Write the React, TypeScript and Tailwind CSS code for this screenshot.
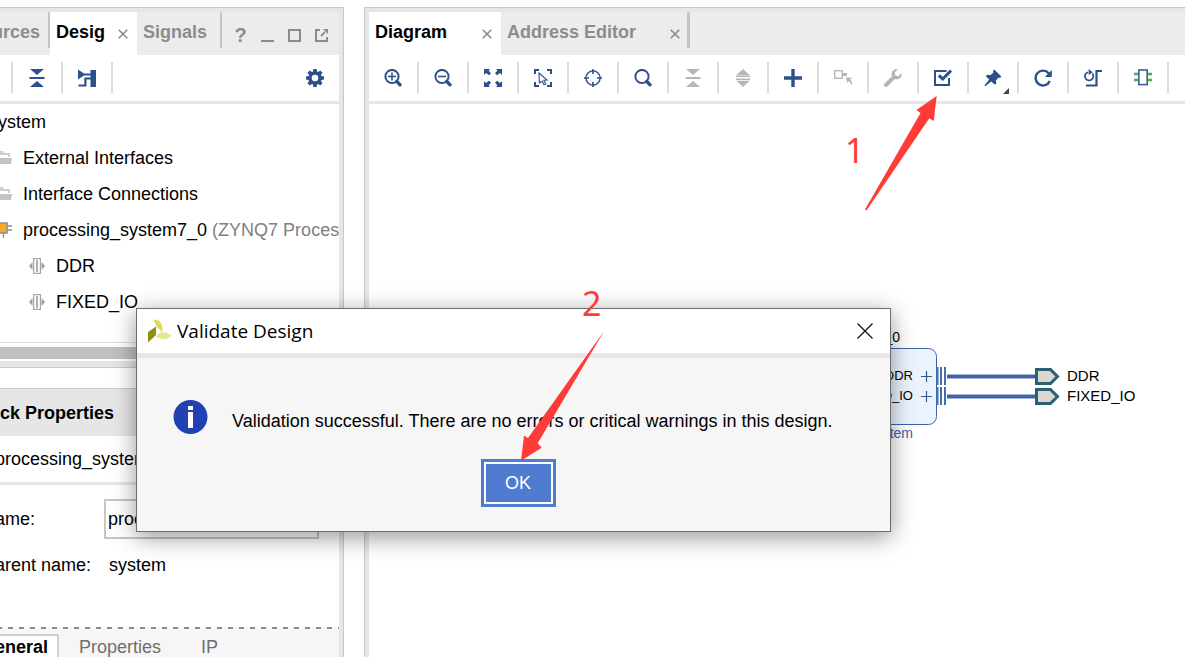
import type { ReactNode } from "react";

const NAVY = "#2d4f8b";
const MUTED = "#b6b6b6";

function Icon({ children, size = 18 }: { children: ReactNode; size?: number }) {
  return (
    <svg width={size} height={size} viewBox={`0 0 ${size} ${size}`} fill="none" aria-hidden="true" className="shrink-0">
      {children}
    </svg>
  );
}

function CloseGlyph() {
  return (
    <svg width="10" height="10" viewBox="0 0 10 10" aria-hidden="true">
      <path d="M0.7 0.7L9.3 9.3M9.3 0.7L0.7 9.3" stroke="#8c8c8c" strokeWidth="1.6" />
    </svg>
  );
}

function Collapse({ color }: { color: string }) {
  return (
    <Icon>
      <path d="M2 0H16L9 6ZM2 18H16L9 12Z" fill={color} />
      <path d="M1.5 9H16.5" stroke={color} strokeWidth="2" />
    </Icon>
  );
}

function Gear() {
  const teeth = [0, 45, 90, 135, 180, 225, 270, 315];
  return (
    <Icon>
      <circle cx="9" cy="9" r="5" stroke={NAVY} strokeWidth="3.4" />
      {teeth.map((a) => (
        <path key={a} d="M7.4 0H10.6L11.2 3.4H6.8Z" fill={NAVY} transform={`rotate(${a} 9 9)`} />
      ))}
    </Icon>
  );
}

const magnifier = (
  <>
    <circle cx="8" cy="7.5" r="6.6" stroke={NAVY} strokeWidth="2" />
    <path d="M12.8 12.4L16 15.8" stroke={NAVY} strokeWidth="3.4" strokeLinecap="round" />
  </>
);

const tools: { name: string; icon: ReactNode; disabled?: boolean }[] = [
  {
    name: "Zoom in",
    icon: (
      <Icon>
        {magnifier}
        <path d="M4 7.5H12M8 3.5V11.5" stroke={NAVY} strokeWidth="1.5" />
      </Icon>
    ),
  },
  {
    name: "Zoom out",
    icon: (
      <Icon>
        {magnifier}
        <path d="M4 7.5H12" stroke={NAVY} strokeWidth="1.6" />
      </Icon>
    ),
  },
  {
    name: "Zoom fit",
    icon: (
      <Icon>
        <path d="M0 0H6L4.6 1.6L7 4.2L5 6.2L2 3.9L0 6ZM18 0V6L16 3.9L13 6.2L11 4.2L13.4 1.6L12 0ZM0 18V12L2 14.1L5 11.8L7 13.8L4.6 16.4L6 18ZM18 18H12L13.4 16.4L11 13.8L13 11.8L16 14.1L18 12Z" fill={NAVY} />
      </Icon>
    ),
  },
  {
    name: "Select area",
    icon: (
      <Icon>
        <path d="M1 5V1H5M13 1H17V5M17 13V17H13M5 17H1V13" stroke={NAVY} strokeWidth="2" />
        <path d="M5 4L13 11L9.8 11.2L11.8 15L10 15.8L8.2 12.2L5.4 14Z" stroke={NAVY} strokeWidth="1.1" />
      </Icon>
    ),
  },
  {
    name: "Center selection",
    icon: (
      <Icon>
        <circle cx="9" cy="9" r="7.1" stroke={NAVY} strokeWidth="1.4" />
        <path d="M9 0V5M9 13V18M0 9H5M13 9H18" stroke={NAVY} strokeWidth="1.6" />
      </Icon>
    ),
  },
  { name: "Search", icon: <Icon>{magnifier}</Icon> },
  { name: "Collapse all", icon: <Collapse color={MUTED} />, disabled: true },
  {
    name: "Expand all",
    icon: (
      <Icon>
        <path d="M2.5 6L9 0L15.5 6ZM2.5 12H15.5L9 18Z" fill={MUTED} />
        <path d="M2 7.2H16M2 10.4H16" stroke={MUTED} strokeWidth="1.6" />
      </Icon>
    ),
    disabled: true,
  },
  {
    name: "Add IP",
    icon: (
      <Icon>
        <path d="M9 0V18M0 9H18" stroke={NAVY} strokeWidth="3.4" />
      </Icon>
    ),
  },
  {
    name: "Make external",
    icon: (
      <Icon>
        <rect x="0.7" y="1.7" width="7.6" height="7.6" stroke={MUTED} strokeWidth="1.4" />
        <path d="M9 4H13V7H9ZM12 8.5H18L16.2 10.4L18 13V16L14.8 12L13 14Z" fill={MUTED} />
      </Icon>
    ),
    disabled: true,
  },
  {
    name: "Customize block",
    icon: (
      <Icon>
        <path d="M17.6 4.2L14.4 7.2L11.4 6.6L10.8 3.8L13.8 0.6C11 -0.4 7.6 1.6 7.6 5.2C7.6 6 7.7 6.6 8 7.2L0.8 14.2C-0.4 15.4 -0.2 16.6 0.6 17.4C1.4 18.2 2.8 18.2 3.8 17.2L10.8 10C14.8 11.4 18.8 8 17.6 4.2Z" fill={MUTED} />
      </Icon>
    ),
    disabled: true,
  },
  {
    name: "Validate design",
    icon: (
      <Icon>
        <path d="M12.5 2H1V16H15V9" stroke={NAVY} strokeWidth="2" />
        <path d="M4.8 6.5L8.8 10L17 1.6" stroke={NAVY} strokeWidth="3" />
      </Icon>
    ),
  },
  {
    name: "Pin",
    icon: (
      <Icon>
        <path d="M10.2 0.6L17.4 7.6L16 9L14.6 8.6L12 11.4L12.2 15L10.6 15.6L7.2 12.6L1.2 17.2L0.4 16.6L5.2 10.6L2 7.4L3 5.8L6.6 6L9.4 3.4L9 2Z" fill={NAVY} />
      </Icon>
    ),
  },
  {
    name: "Regenerate layout",
    icon: (
      <Icon>
        <path d="M14.8 4.4A7.4 7.4 0 1 0 15.8 12" stroke={NAVY} strokeWidth="2.4" />
        <path d="M17.8 1V8H10.8Z" fill={NAVY} />
      </Icon>
    ),
  },
  {
    name: "Optimize routing",
    icon: (
      <Icon>
        <path d="M4 3.2A4.2 4.2 0 1 0 8.4 4.6" stroke={NAVY} strokeWidth="1.7" />
        <path d="M4.6 0L8.8 3.2L4.6 6Z" fill={NAVY} />
        <path d="M2 16.5H12.5V2H18" stroke={NAVY} strokeWidth="2.2" />
      </Icon>
    ),
  },
  {
    name: "Interface view",
    icon: (
      <Icon>
        <path d="M0 5H5M0 11H5M13 5H18M13 11H18" stroke="#42b549" strokeWidth="2.4" />
        <rect x="4.8" y="1" width="8.4" height="14.6" stroke="#3f5f95" strokeWidth="1.6" fill="#fff" />
      </Icon>
    ),
  },
];

function FolderIcon() {
  return (
    <svg width="12" height="14" viewBox="0 0 12 14" aria-hidden="true" className="shrink-0">
      <path d="M0 0H3L4 2H10V6H8V4H0Z" fill="#cfcfcf" />
      <path d="M0 7H12L11 13H0Z" fill="#c4c4c4" />
    </svg>
  );
}

function IpIcon() {
  return (
    <svg width="12" height="18" viewBox="0 0 12 18" aria-hidden="true" className="shrink-0">
      <path d="M7 5H12M7 9H12M3.5 11V17" stroke="#8f8f8f" strokeWidth="1.4" />
      <path d="M-2 2H7V12H-2Z" fill="#f8aa26" stroke="#8f8f8f" strokeWidth="1.6" />
    </svg>
  );
}

function BusIcon() {
  return (
    <svg width="16" height="16" viewBox="0 0 16 16" aria-hidden="true" className="shrink-0">
      <path d="M3.5 4V12L0 8ZM12.5 4V12L16 8Z" fill="#a0a0a0" />
      <rect x="4.6" y="0.6" width="6.8" height="14.8" fill="#fff" stroke="#a6a6a6" strokeWidth="1.2" />
      <path d="M8 2V14" stroke="#a6a6a6" strokeWidth="1.8" />
    </svg>
  );
}

function LeftTabs() {
  return (
    <div className="flex h-[43px] bg-[#ececec]">
      <div className="flex h-9 w-[50px] shrink-0 justify-end overflow-hidden border-r-2 border-[#c4c4c4]">
        <button className="mr-2 mt-[10px] h-5 font-bold leading-5 text-[#8c8c8c]">urces</button>
      </div>
      <div className="flex w-[87px] shrink-0 items-start bg-white pl-[6px] pt-[10px]">
        <button className="font-bold leading-5">Desig</button>
        <button aria-label="Close Design" className="ml-[13px] mt-[7px]">
          <CloseGlyph />
        </button>
      </div>
      <div className="h-9 w-[85px] shrink-0 border-r-2 border-[#c4c4c4] pl-[6px] pt-[10px]">
        <button className="block font-bold leading-5 text-[#8c8c8c]">Signals</button>
      </div>
      <div className="flex flex-1 items-end justify-end gap-[14px] pb-[13px] pr-[11px]">
        <button aria-label="Help" className="h-[15px] w-[13px] text-xl font-bold leading-4 text-[#8c8c8c]">?</button>
        <button aria-label="Minimize">
          <Icon size={13}><path d="M0 12H13" stroke="#8c8c8c" strokeWidth="2" /></Icon>
        </button>
        <button aria-label="Maximize">
          <Icon size={13}><rect x="1" y="1" width="11" height="11" stroke="#8c8c8c" strokeWidth="2" /></Icon>
        </button>
        <button aria-label="Float">
          <Icon size={13}>
            <path d="M5 1H1V12H12V8" stroke="#8c8c8c" strokeWidth="2" />
            <path d="M6 7L10 3" stroke="#8c8c8c" strokeWidth="1.8" />
            <path d="M8 0H13V5Z" fill="#8c8c8c" />
          </Icon>
        </button>
      </div>
    </div>
  );
}

function LeftToolbar() {
  return (
    <div className="flex h-[49px] items-start border-b-3 border-[#e6e6e6] pt-[7px]">
      <div className="h-[31px] w-[13px] shrink-0 border-r-2 border-[#dcdcdc]" />
      <button aria-label="Collapse all" className="flex h-[31px] w-[50px] items-center justify-center border-r-2 border-[#dcdcdc]">
        <Collapse color={NAVY} />
      </button>
      <button aria-label="Hierarchy" className="flex h-[31px] w-[50px] items-center justify-center border-r-2 border-[#dcdcdc]">
        <Icon>
          <path d="M0 0.5L6 4.4H12.5V1H18V18H12.5V10.5H8.5V17.6H0.5V15.6H6.3V8.5H12.5V6.6H6L0 10.5Z" fill={NAVY} />
        </Icon>
      </button>
      <button aria-label="Settings" className="ml-auto mr-[15px] flex h-[31px] items-center">
        <Gear />
      </button>
    </div>
  );
}

function DesignTree() {
  return (
    <ul className="h-[238px] whitespace-nowrap">
      <li className="-ml-[2px] flex h-9 items-center">ystem</li>
      <li className="flex h-9 items-center gap-[11px]"><FolderIcon />External Interfaces</li>
      <li className="flex h-9 items-center gap-[11px]"><FolderIcon />Interface Connections</li>
      <li className="flex h-9 items-center gap-[11px]">
        <IpIcon />
        <span>processing_system7_0 <span className="text-[#808080]">(ZYNQ7 Proces</span></span>
      </li>
      <li className="flex h-9 items-center gap-[11px] pl-[29px]"><BusIcon />DDR</li>
      <li className="flex h-9 items-center gap-[11px] pl-[29px]"><BusIcon />FIXED_IO</li>
    </ul>
  );
}

function BlockProperties() {
  return (
    <section className="mt-5 flex min-h-0 flex-1 flex-col border-r border-t border-[#c8c8c8]">
      <div className="flex min-h-0 flex-1 flex-col overflow-hidden border-r-4 border-[#e6e6e6]">
        <h2 className="flex h-[47px] shrink-0 items-center bg-[#e6e6e6] font-bold">ck Properties</h2>
        <div className="flex h-[49px] shrink-0 items-center border-b-3 border-[#e6e6e6]">
          <span className="-ml-[5px]">processing_system7_0</span>
        </div>
        <div className="-ml-[5px] flex h-[68px] shrink-0 items-center">
          <label htmlFor="block-name" className="w-[109px]">ame:</label>
          <input
            id="block-name"
            defaultValue="processing_system7_0"
            className="h-10 w-[215px] border-2 border-[#c6c6c6] bg-white px-[2px] outline-none"
          />
        </div>
        <div className="-ml-[5px] flex h-6 shrink-0 items-center whitespace-nowrap">
          <span className="w-[114px]">arent name:</span>
          <span>system</span>
        </div>
        <div className="mt-[50px] flex-1 bg-[#f6f6f6]">
          <svg width="100%" height="2" aria-hidden="true" className="block">
            <path d="M-3 1H2000" stroke="#8c8c8c" strokeWidth="2" strokeDasharray="5 6" />
          </svg>
          <div className="-ml-[5px] flex pt-[5px]">
            <button className="h-[23px] w-16 border-r-2 border-t-2 border-[#cfcfcf] bg-white text-left font-bold leading-5">eneral</button>
            <button className="ml-5 h-[23px] pt-[2px] leading-5 text-[#6e6e6e]">Properties</button>
            <button className="ml-10 h-[23px] pt-[2px] leading-5 text-[#6e6e6e]">IP</button>
          </div>
        </div>
      </div>
    </section>
  );
}

function BlockDiagram() {
  return (
    <svg
      width="345"
      height="130"
      viewBox="840 320 345 130"
      className="absolute left-[471px] top-[216px] font-['Liberation_Sans',sans-serif]"
      role="img"
      aria-label="Block diagram"
    >
      <text x="900" y="342" fontSize="14" textAnchor="end">_0</text>
      <rect x="760" y="348.5" width="176.5" height="76" rx="8" fill="#ebf4fe" stroke="#3f64a6" />
      <text x="913" y="380" fontSize="13" textAnchor="end">DDR</text>
      <text x="913" y="400" fontSize="13" textAnchor="end">FIXED_IO</text>
      <text x="913" y="438" fontSize="14" textAnchor="end" fill="#4562a2">System</text>
      {[376.5, 396.5].map((y) => (
        <g key={y}>
          <path d={`M921 ${y}H932M926.5 ${y - 5.5}V${y + 5.5}`} stroke="#35568f" strokeWidth="1.2" />
          <path d={`M937.5 ${y - 9.5}V${y + 8.5}M941 ${y - 9.5}V${y + 8.5}M945 ${y - 9.5}V${y + 8.5}`} stroke="#4470ad" strokeWidth="2" />
          <path d={`M947 ${y}H1035`} stroke="#a3b5d8" strokeWidth="5" />
          <path d={`M947 ${y}H1035`} stroke="#3f63a4" strokeWidth="3" />
          <path d={`M1036.5 ${y - 7}H1050.5L1057.5 ${y}L1050.5 ${y + 7}H1036.5Z`} fill="#ddd5d0" stroke="#2a6073" strokeWidth="3" />
        </g>
      ))}
      <text x="1067" y="381" fontSize="15">DDR</text>
      <text x="1067" y="401" fontSize="15">FIXED_IO</text>
    </svg>
  );
}

function ValidateDialog() {
  return (
    <div
      role="dialog"
      aria-labelledby="dialog-title"
      className="absolute left-[136px] top-[308px] w-[755px] border border-[#6c6c6c] bg-[#f6f6f6] shadow-[0_5px_22px_rgba(0,0,0,0.42)]"
    >
      <div className="flex h-[49px] items-center border-b-5 border-[#e6e6e6] bg-white pb-px pl-[11px] pr-[17px]">
        <svg width="24" height="24" viewBox="0 0 24 24" aria-hidden="true">
          <path d="M0 13L8 7.5V16L0 23.5Z" fill="#8f8f12" />
          <path d="M5.5 0.5C10 0 15 3.5 14.5 12L14 13L8.5 7.5Z" fill="#dadd56" />
          <path d="M8 17.5L13 13C17 13 20 14 24 16.5C19 21 13 21.5 8 17.5Z" fill="#e6e994" />
        </svg>
        <h1 id="dialog-title" className="ml-[5px] font-['Open_Sans',sans-serif] text-[19px]">Validate Design</h1>
        <button aria-label="Close" className="ml-auto">
          <svg width="16" height="16" viewBox="0 0 16 16" aria-hidden="true">
            <path d="M0.5 0.5L15.5 15.5M15.5 0.5L0.5 15.5" stroke="#111" strokeWidth="1.3" />
          </svg>
        </button>
      </div>
      <div className="flex flex-col px-9 pb-6 pt-[42px]">
        <div className="flex items-end gap-6">
          <svg width="35" height="34" viewBox="0 0 35 34" aria-hidden="true" className="shrink-0">
            <circle cx="17.5" cy="17" r="17" fill="#2040b3" />
            <path d="M15 6H20V10H15ZM15 12H20V28H15Z" fill="#fff" />
          </svg>
          <p className="whitespace-nowrap leading-[26px]">
            Validation successful. There are no errors or critical warnings in this design.
          </p>
        </div>
        <button className="mr-[-9px] mt-[25px] h-12 w-[75px] self-center border-3 border-[#4f7bd0] bg-[#4f7bd0] text-white">
          <span className="flex h-full items-center justify-center border-2 border-white">OK</span>
        </button>
      </div>
    </div>
  );
}

function Annotations() {
  return (
    <svg width="100%" height="100%" className="pointer-events-none absolute inset-0 font-['Noto_Sans',sans-serif]" fill="#ff3b38">
      <path d="M936.7 96L933.7 121L929.3 118.3L866.5 210.5L865 209.5L920.5 113L916.3 110Z" />
      <path d="M521 460.7L524 435.7L528 438L604.3 330.7L537.7 443.3L541.7 447.7Z" />
      <text x="845" y="163" fontSize="34">1</text>
      <text x="582" y="316" fontSize="34">2</text>
    </svg>
  );
}

export default function App() {
  return (
    <div className="relative flex h-screen gap-5 overflow-hidden bg-white pt-[7px] font-['Liberation_Sans',Arial,sans-serif] text-[18px] leading-5 text-black">
      <aside className="flex w-[344px] shrink-0 flex-col overflow-hidden">
        <section className="border-y border-r border-[#c8c8c8]">
          <div className="overflow-hidden border-b-6 border-r-4 border-t-4 border-[#e6e6e6]">
            <LeftTabs />
            <LeftToolbar />
            <DesignTree />
            <div className="border-t border-[#dedede] pb-[2px] pt-1">
              <div className="h-3 bg-[#c0c0c0]" />
            </div>
          </div>
        </section>
        <BlockProperties />
      </aside>

      <main className="flex min-w-0 flex-1 flex-col border-l border-t border-[#c8c8c8]">
        <div className="flex min-h-0 flex-1 flex-col border-l-4 border-t-4 border-[#e6e6e6]">
          <div className="flex h-[43px] shrink-0 bg-[#ececec]">
            <div className="flex w-[132px] items-start bg-white pl-[6px] pr-[9px] pt-[10px]">
              <button className="font-bold leading-5">Diagram</button>
              <button aria-label="Close Diagram" className="ml-auto mt-[7px]"><CloseGlyph /></button>
            </div>
            <div className="flex h-9 w-[189px] items-start border-r-3 border-[#c4c4c4] pl-[6px] pr-[7px] pt-[10px]">
              <button className="whitespace-nowrap font-bold leading-5 text-[#8c8c8c]">Address Editor</button>
              <button aria-label="Close Address Editor" className="ml-auto mt-[7px]"><CloseGlyph /></button>
            </div>
          </div>
          <div className="flex h-[49px] shrink-0 items-start border-b-3 border-[#e6e6e6] pt-[7px]">
            {tools.map((tool) => (
              <button
                key={tool.name}
                aria-label={tool.name}
                disabled={tool.disabled}
                className="relative flex h-[31px] w-[50px] shrink-0 items-center justify-center border-r-2 border-[#dcdcdc]"
              >
                {tool.icon}
                {tool.name === "Pin" && (
                  <svg width="6" height="6" viewBox="0 0 6 6" className="absolute -bottom-px right-[8px]" aria-hidden="true">
                    <path d="M6 0V6H0Z" fill="#444" />
                  </svg>
                )}
              </button>
            ))}
          </div>
          <div className="relative min-h-0 flex-1 overflow-hidden">
            <BlockDiagram />
          </div>
        </div>
      </main>

      <ValidateDialog />
      <Annotations />
    </div>
  );
}
